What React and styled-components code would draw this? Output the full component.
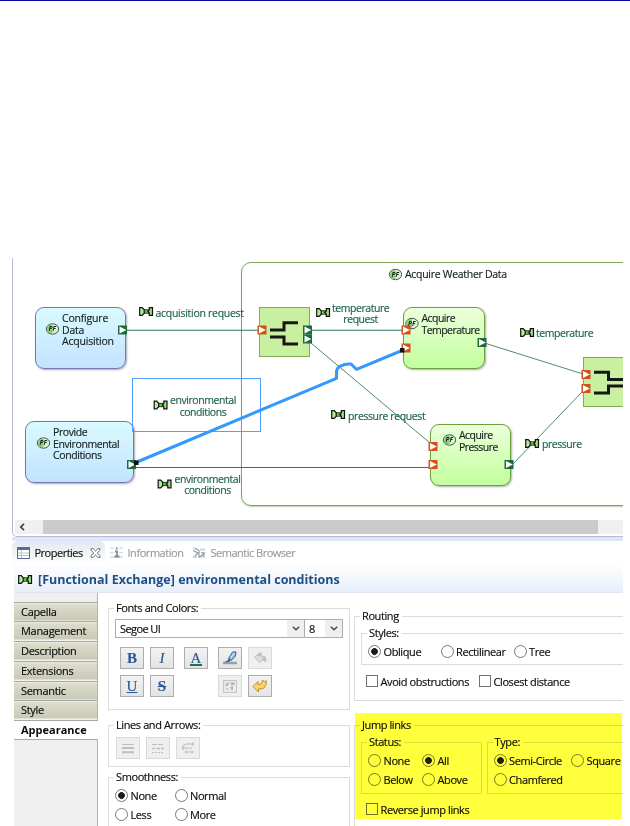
import React from "react";
import styled, { createGlobalStyle, css } from "styled-components";

const GlobalStyle = createGlobalStyle`
  * { box-sizing: border-box; }
  html, body { margin: 0; padding: 0; background: #fff; overflow: hidden; }
  body {
    font-family: "Open Sans", "Noto Sans", sans-serif;
    font-size: 11px;
    letter-spacing: -0.4px;
    color: #0c0c0c;
    -webkit-text-stroke: 0.15px currentColor;
  }
`;

const Page = styled.div`
  width: 630px;
  height: 826px;
  overflow: hidden;
  display: flex;
  flex-direction: column;
  border-top: 1px solid #0a0aa0;
  padding: 257px 7px 0 12px;
`;

/* ---------- diagram editor ---------- */

const Editor = styled.section`
  height: 279px;
  flex: none;
  border-left: 1px solid #b9b9d6;
  border-bottom: 1px solid #b9b9d6;
  border-bottom-left-radius: 5px;
  display: flex;
  flex-direction: column;
  background: #fff;
`;

const Canvas = styled.div`
  position: relative;
  height: 262px;
  overflow: hidden;
`;

const OX = 13;
const OY = 258;

const Wires = styled.svg`
  position: absolute;
  inset: 0;
  width: 610px;
  height: 262px;
`;

const at = css`
  position: absolute;
  left: ${(p) => p.$x - OX}px;
  top: ${(p) => p.$y - OY}px;
`;

const tones = {
  blue: css`
    border: 1.5px solid #7377b4;
    background: linear-gradient(#dafaff, #c3e2ff);
  `,
  green: css`
    border: 1.5px solid #6a9f3a;
    background: linear-gradient(#edffdc, #c2ff9e);
  `,
};

const FunctionNode = styled.div`
  ${at}
  width: ${(p) => p.$w}px;
  height: 62px;
  border-radius: 9px;
  box-shadow: 1px 1px 2px rgba(70, 70, 90, 0.45);
  ${(p) => tones[p.$tone]}
`;

const Container = styled.div`
  ${at}
  width: 420px;
  height: 244px;
  border: 1.5px solid #7da65a;
  border-radius: 10px;
  box-shadow: 0 1px 1px rgba(90, 120, 60, 0.35);
`;

const Block = styled.div`
  ${at}
  width: 51px;
  height: 50px;
  background: #c9f0a1;
  border: 1px solid #7fae4e;
`;

const NodeText = styled.div`
  ${at}
  line-height: 11.7px;
  white-space: pre;
  text-align: ${(p) => (p.$center ? "center" : "left")};
  color: ${(p) => (p.$link ? "#1c6249" : "#14201c")};
  letter-spacing: ${(p) => p.$ls}px;
  font-size: 10.5px;
`;

/* ---------- views below the editor ---------- */

const TabBar = styled.nav`
  height: 27px;
  flex: none;
  display: flex;
  align-items: stretch;
  padding-top: 4px;
  background: linear-gradient(#e0e5f5 0, #e0e5f5 4px, #fff 4px, #fff 100%);
`;

const ViewTab = styled.div`
  display: flex;
  align-items: center;
  flex: none;
  gap: 4.5px;
  width: ${(p) => p.$w}px;
  padding-left: 5px;
  color: ${(p) => (p.$active ? "#111" : "#9b9b9b")};
  border-radius: 6px 6px 0 0;
  background: ${(p) => (p.$active ? "linear-gradient(#e4e7f1, #fff)" : "none")};
  white-space: nowrap;
`;

const TabName = styled.span`
  margin-right: 3px;
  letter-spacing: ${(p) => p.$ls}px;
`;

const TitleBar = styled.header`
  height: 29px;
  flex: none;
  display: flex;
  align-items: center;
  gap: 5px;
  margin-left: 2px;
  padding: 3px 0 0 4px;
  background: linear-gradient(#fff, #e7eef9);
  border-bottom: 1px solid #dfe4ee;
  color: #1d4f86;
  font-weight: 700;
  font-size: 12.5px;
  letter-spacing: 0;
  -webkit-text-stroke: 0;
  white-space: nowrap;
`;

const Body = styled.div`
  flex: 1;
  min-height: 0;
  display: flex;
  margin-left: 2px;
`;

const SideTabs = styled.aside`
  width: 84px;
  flex: none;
  background: #f0f0f0;
  border-right: 1px solid #b4b4b4;
  padding-top: 8.5px;
`;

const SideTab = styled.div`
  height: 19.75px;
  padding-left: 7px;
  line-height: 17.5px;
  letter-spacing: -0.3px;
  white-space: nowrap;
  border-top: 1px solid #a8a8a8;
  width: 83px;
  ${(p) =>
    p.$active
      ? css`
          width: 84px;
          background: #fff;
          font-weight: 700;
          letter-spacing: 0;
          -webkit-text-stroke: 0;
          border-bottom: 1px solid #a8a8a8;
        `
      : css`
          background: linear-gradient(#ecece0 0, #dcdccb 2px, #c9c9b7 17px, #f3f3ec 18px);
        `}
`;

const Column = styled.div`
  flex: none;
  width: ${(p) => p.$w}px;
  margin-left: ${(p) => p.$ml}px;
  padding-top: ${(p) => p.$pt}px;
  position: relative;
`;

const Group = styled.fieldset`
  margin: 0 0 ${(p) => p.$mb || 0}px;
  min-width: 0;
  width: ${(p) => (p.$w ? p.$w + "px" : "auto")};
  height: ${(p) => p.$h}px;
  border: 1px solid #dcdcdc;
  padding: ${(p) => p.$pt || 0}px 6px 0;
  ${(p) => p.$open && css`border-right: 0; padding-right: 0;`}
`;

const Legend = styled.legend`
  margin-left: -1px;
  padding: 0 3px 0 2px;
  height: 14px;
  line-height: 14px;
  white-space: nowrap;
`;

const ComboRow = styled.div`
  display: flex;
  height: 19px;
`;

const Combo = styled.div`
  width: ${(p) => p.$w}px;
  margin-right: -1px;
  border: 1px solid #acacb4;
  display: flex;
  align-items: center;
  justify-content: space-between;
  padding-left: 4px;
  letter-spacing: -0.6px;
`;

const ComboArrow = styled.span`
  width: 17px;
  height: 17px;
  background: #efefef;
  display: flex;
  align-items: center;
  justify-content: center;
`;

const ToolGrid = styled.div`
  display: grid;
  grid-template-columns: 30px 34px 34px 30px 24px;
  grid-auto-rows: 22px;
  row-gap: 6px;
  margin: 9px 0 0 5px;
`;

const ToolRow = styled.div`
  display: flex;
  gap: 6px;
  margin-left: 1px;
`;

const ToolButton = styled.div`
  width: 24px;
  height: 22px;
  grid-column: ${(p) => p.$col || "auto"};
  display: flex;
  align-items: center;
  justify-content: center;
  background: ${(p) => (p.$off ? "#efefef" : "linear-gradient(#f2f2f2, #e4e4e4)")};
  border: 1px solid ${(p) => (p.$off ? "#d9d9d9" : "#adadad")};
  color: #2c5a93;
  font-family: "Liberation Serif", serif;
  font-weight: 700;
  font-size: 15px;
  letter-spacing: 0;
  line-height: 1;
`;

const Glyph = styled.span`
  font-style: ${(p) => (p.$italic ? "italic" : "normal")};
  font-weight: ${(p) => (p.$thin ? 400 : 700)};
  text-decoration: ${(p) => p.$line || "none"};
  text-decoration-thickness: 1px;
  border-bottom: ${(p) => (p.$bar ? "2.5px solid #1d7544" : "0")};
  line-height: ${(p) => (p.$bar ? "12px" : "1")};
  padding: 0 1px;
  margin-top: ${(p) => (p.$bar ? "2px" : "0")};
`;

const OptionGrid = styled.div`
  display: grid;
  grid-template-columns: ${(p) => p.$cols};
  grid-auto-rows: 19px;
  align-items: center;
  margin: ${(p) => p.$mt || 0}px 0 0 ${(p) => p.$ml || 0}px;
`;

const Option = styled.label`
  display: flex;
  align-items: center;
  gap: 2.5px;
  white-space: nowrap;
`;

const Circle = styled.span`
  width: 13px;
  height: 13px;
  flex: none;
  border: 1px solid #777;
  border-radius: 50%;
  background: ${(p) => (p.$on ? "radial-gradient(circle, #1c1c1c 0, #1c1c1c 3px, #fff 3.7px)" : "#fff")};
`;

const Box = styled.span`
  width: 12px;
  height: 12px;
  flex: none;
  border: 1px solid #707070;
  background: #fff;
`;

const PairRow = styled.div`
  display: flex;
  gap: 5px;
  padding-top: 3px;
`;

const Highlight = styled.div`
  position: absolute;
  left: 1px;
  top: 120px;
  width: 267px;
  height: 106px;
  background: #ffff3c;
  mix-blend-mode: multiply;
  pointer-events: none;
`;

/* ---------- drawings ---------- */

const ExchangeShape = () => (
  <>
    <rect x="4.5" y="2.8" width="6.500" height="3.4" fill="#5fce3c" stroke="#1a2a1a" strokeWidth=".9" />
    <path d="M.7 .7H3.200L5.2 2.800V6.200L3.200 8.3H.7Z" fill="#b5eaa0" stroke="#111" strokeWidth="1.2" />
    <path d="M13.5 .7H10.300V2.9L8.800 4.5L10.300 6.1V8.3H13.5Z" fill="#9be082" stroke="#111" strokeWidth="1.2" />
  </>
);

const Exchange = ({ x, y }) => (
  <g transform={`translate(${x} ${y})`}>
    <ExchangeShape />
  </g>
);

const Port = ({ x, y, c }) => (
  <g transform={`translate(${x} ${y})`}>
    <rect width="9" height="9" fill={c === "o" ? "#d2501c" : "#1b6b3d"} />
    <path d="M1.5 1L8.300 4.5L1.5 8Z" fill="#fff" />
  </g>
);

const FunctionMark = ({ x, y }) => (
  <g transform={`translate(${x} ${y})`}>
    <ellipse rx="6.200" ry="5.200" fill="#dcf3d3" stroke="#445a48" strokeWidth="1" />
    <path d="M0 -4.5A5.5 4.5 0 0 0 0 4.5Z" fill="#8ccf74" />
    <text x="-.2" y="2.4" textAnchor="middle" fontSize="6.5" fontWeight="700" fontStyle="italic" letterSpacing="0" fill="#14251a">PF</text>
  </g>
);

const wires = [
  "M127 330.3H258",
  "M310 330.3H402",
  "M133 467.5H429",
];
const slanted = ["M311 343L430 443", "M486 343.5L583 374", "M512 465L583 391"];

const boxPorts = [
  [257.5, 325.5, "o"], [303, 325.5, "g"], [303, 334.5, "g"],
  [401.5, 325.5, "o"], [401.5, 343.5, "o"], [477.5, 338, "g"],
  [428.5, 442, "o"], [428.5, 460, "o"], [504.5, 460, "g"],
  [581.5, 370, "o"], [581.5, 384, "o"],
  [118, 325.5, "g"], [127, 460, "g"],
];
const exchanges = [
  [139, 307], [316, 308], [520, 328], [331, 410], [525, 439], [153.5, 400.5], [157.5, 479.5],
];
const marks = [[52.5, 329], [43.5, 443], [395.5, 274.5], [412, 323.5], [449.5, 440]];

const linkLabels = [
  { x: 155.5, t: "acquisition request", y: 308, ls: -0.28 },
  { x: 332, t: "temperature\nrequest", y: 302.5, ls: -0.45 },
  { x: 536, t: "temperature", y: 327.5, ls: -0.45 },
  { x: 348, t: "pressure request", y: 410.5, ls: -0.4 },
  { x: 542, t: "pressure", y: 438.5, ls: -0.45 },
  { x: 170, t: "environmental\nconditions", y: 395, ls: -0.43 },
  { x: 174.5, t: "environmental\nconditions", y: 473.5, ls: -0.43 },
];
const nodeLabels = [
  { x: 62, y: 313, t: "Configure\nData\nAcquisition", ls: -0.2 },
  { x: 53, y: 427, t: "Provide\nEnvironmental\nConditions", ls: -0.4 },
  { x: 405, y: 268.7, t: "Acquire Weather Data", ls: -0.29 },
  { x: 421.5, y: 313, t: "Acquire\nTemperature", ls: -0.55 },
  { x: 459, y: 430, t: "Acquire\nPressure", ls: -0.55 },
];

function Diagram() {
  return (
    <Canvas>
      <Container $x={241} $y={262} />
      <FunctionNode $x={35} $y={307} $w={91} $tone="blue" />
      <FunctionNode $x={25} $y={421} $w={109} $tone="blue" />
      <FunctionNode $x={403} $y={307} $w={82} $tone="green" />
      <FunctionNode $x={430} $y={424} $w={81} $tone="green" />
      <Block $x={259} $y={307} />
      <Block $x={583} $y={357} />
      <Wires viewBox="13 258 610 262">
        <g fill="none" stroke="#2e7a53" strokeWidth="1.1">
          {wires.map((d) => <path key={d} d={d} />)}
        </g>
        <g fill="none" stroke="#4f8d6c" strokeWidth="1">
          {slanted.map((d) => <path key={d} d={d} />)}
        </g>
        <rect x="132.5" y="378.5" width="128" height="53" fill="none" stroke="#4fa3ff" />
        <path
          d="M137 462L336.5 378.3V371Q338 366.500 341 366Q345 363.500 351 364L356.500 369.300L402 350.500"
          fill="none" stroke="#3399ff" strokeWidth="3" strokeLinejoin="round"
        />
        <g fill="none" stroke="#171717" strokeWidth="3">
          <path d="M270 330H284V322.700H298M270 337H284V344H298" />
          <path d="M594 372.300H608.500V379.500H623M594 393H608.500V386H623" />
        </g>
        {marks.map(([x, y]) => <FunctionMark key={x} x={x} y={y} />)}
        {boxPorts.map(([x, y, c]) => <Port key={`${x}-${y}`} x={x} y={y} c={c} />)}
        {exchanges.map(([x, y]) => <Exchange key={x} x={x} y={y} />)}
        <rect x="134" y="460.500" width="4.500" height="4.500" fill="#111" />
        <rect x="400" y="348" width="4.500" height="4.500" fill="#111" />
      </Wires>
      {nodeLabels.map((l) => <NodeText key={l.x} $x={l.x} $y={l.y} $ls={l.ls}>{l.t}</NodeText>)}
      {linkLabels.map((l) => <NodeText key={l.x} $x={l.x} $y={l.y} $ls={l.ls} $link $center>{l.t}</NodeText>)}
    </Canvas>
  );
}

const ScrollBar = styled.div`
  height: 14px;
  margin-left: 2px;
  background: #f0f0f0;
  display: flex;
`;
const ScrollButton = styled.div`
  width: 28px;
  padding: 3px 0 0 4px;
  line-height: 0;
`;
const Thumb = styled.div`
  width: 555px;
  background: #cbcbcb;
`;

const Chevron = () => (
  <svg width="8" height="5" viewBox="0 0 8 5"><path d="M.8.700L4 3.800L7.200.700" fill="none" stroke="#444" strokeWidth="1.400" /></svg>
);

const TableIcon = () => (
  <svg width="13" height="12" viewBox="0 0 13 12">
    <rect x=".5" y=".5" width="12" height="11" fill="#fff" stroke="#5b6b94" />
    <path d="M1 2H12" stroke="#5b6b94" strokeWidth="2" />
    <path d="M4.500 3V11M1 6H12M1 8.500H12" stroke="#a9b6d3" strokeWidth=".8" />
  </svg>
);
const CloseIcon = () => (
  <svg width="11" height="10" viewBox="0 0 11 10">
    <path d="M1 .6H3L5.500 3L8 .6H10V2L7.300 5L10 8V9.400H8L5.500 7L3 9.400H1V8L3.700 5L1 2Z" fill="#fff" stroke="#666" strokeWidth=".9" />
  </svg>
);
const InfoIcon = () => (
  <svg width="13" height="13" viewBox="0 0 13 13">
    <path d="M0 2H4M9 2H13M0 6.500H4M9 6.500H13M0 11H13" stroke="#d3ddee" strokeWidth="1.500" />
    <path d="M5 5.500H7V10.500M4.500 10.500H9.500M6.700 1.500V3.500" fill="none" stroke="#858a94" strokeWidth="1.800" />
  </svg>
);
const BrowserIcon = () => (
  <svg width="14" height="12" viewBox="0 0 14 12">
    <path d="M1 1.500H5M8 2.500H13M1 10H5M9 10H13" stroke="#c7d5e8" strokeWidth="2" />
    <path d="M1 3.500L6 6L3 9M3.500 1.500L7 3.500V10.500M7 10.500L12 6.500M9 5.500L12.500 6L11.500 9" fill="none" stroke="#969aa1" strokeWidth="1.200" />
  </svg>
);
const BrushIcon = () => (
  <svg width="16" height="14" viewBox="0 0 16 14">
    <path d="M1 12H15" stroke="#9aa0a8" strokeWidth="2.500" />
    <path d="M2 11Q6 10.500 6.500 7L9 9.500Q7 12 2 11Z" fill="#2f69a8" />
    <path d="M6.800 7L10.500 1L14 .8L13.500 5L9.300 9.500Z" fill="#94b5dc" stroke="#2f5f99" strokeWidth=".9" />
    <path d="M8.500 7L12.500 2" stroke="#e9f2fb" />
  </svg>
);
const BucketIcon = () => (
  <svg width="14" height="14" viewBox="0 0 14 14">
    <path d="M1.500 6L6.500 2L11.500 7.500L6.500 11.500Z" fill="#dedede" stroke="#bdbdbd" />
    <path d="M4 4L8 1.500V6M11 5Q14 7 12.500 11L10 8.500Z" fill="#c4c4c4" stroke="#bdbdbd" />
  </svg>
);
const PictureIcon = () => (
  <svg width="14" height="13" viewBox="0 0 14 13">
    <rect x=".6" y=".6" width="12.800" height="11.800" fill="#ececec" stroke="#c2c2c2" />
    <path d="M2.500 4L6 2L5 6H2.500ZM7.500 2.500H11.500V5H8ZM7 7L10 6V10H8.500ZM3 8L5 8V10.500" fill="#b4b4b4" />
  </svg>
);
const UndoIcon = () => (
  <svg width="16" height="14" viewBox="0 0 16 14">
    <path d="M1 7.500L6 2.500V5.500Q10 6 10.500 1L12.500 3L14 1.500Q15.500 10.500 6.500 10V13Z" fill="#fbd767" stroke="#b98a2b" strokeWidth="1" strokeLinejoin="round" />
  </svg>
);
const LineIcon = () => (
  <svg width="14" height="11" viewBox="0 0 14 11"><path d="M1 1.500H13" stroke="#bebebe" /><path d="M1 5H13" stroke="#bebebe" strokeWidth="2" /><path d="M1 9.300H13" stroke="#bebebe" strokeWidth="2" /></svg>
);
const DashIcon = () => (
  <svg width="14" height="11" viewBox="0 0 14 11"><path d="M1 1.500H13" stroke="#bebebe" strokeDasharray="5 1" /><path d="M1 5.500H13" stroke="#bebebe" strokeWidth="1.500" strokeDasharray="3.500 1" /><path d="M1 9.500H13" stroke="#bebebe" strokeDasharray="2 1" /></svg>
);
const ArrowsIcon = () => (
  <svg width="14" height="12" viewBox="0 0 14 12"><path d="M5 2H13M11 0L13 2L11 4M3 4L1 6L3 8M1 6H11M4 10H12M5.500 8.500L4 10L5.500 11.500M10.500 8.500L12 10L10.500 11.500M5 2Q2.500 2.500 1.500 5.500" fill="none" stroke="#b8b8b8" /></svg>
);

const Radio = ({ on, children }) => <Option><Circle $on={on} />{children}</Option>;
const Check = ({ children }) => <Option><Box />{children}</Option>;

export default function App() {
  return (
    <Page>
      <GlobalStyle />
      <Editor>
        <Diagram />
        <ScrollBar>
          <ScrollButton>
            <svg width="7" height="8" viewBox="0 0 7 8"><path d="M5 .8L1.800 4L5 7.200" fill="none" stroke="#444" strokeWidth="1.700" /></svg>
          </ScrollButton>
          <Thumb />
        </ScrollBar>
      </Editor>
      <TabBar>
        <ViewTab $w={93} $active><TableIcon /><TabName $ls={-0.5}>Properties</TabName><CloseIcon /></ViewTab>
        <ViewTab $w={82}><InfoIcon /><TabName $ls={-0.45}>Information</TabName></ViewTab>
        <ViewTab $w={120}><BrowserIcon /><TabName $ls={-0.5}>Semantic Browser</TabName></ViewTab>
      </TabBar>
      <TitleBar>
        <svg width="15" height="9" viewBox="0 0 15 9"><ExchangeShape /></svg>
        [Functional Exchange] environmental conditions
      </TitleBar>
      <Body>
        <SideTabs>
          {["Capella", "Management", "Description", "Extensions", "Semantic", "Style"].map((t) => (
            <SideTab key={t}>{t}</SideTab>
          ))}
          <SideTab $active>Appearance</SideTab>
        </SideTabs>
        <Column $w={242} $ml={10} $pt={8}>
          <Group $h={109} $mb={8} $pt={4}>
            <Legend>Fonts and Colors:</Legend>
            <ComboRow>
              <Combo $w={190}>Segoe UI<ComboArrow><Chevron /></ComboArrow></Combo>
              <Combo $w={39}>8<ComboArrow><Chevron /></ComboArrow></Combo>
            </ComboRow>
            <ToolGrid>
              <ToolButton><Glyph>B</Glyph></ToolButton>
              <ToolButton><Glyph $italic $thin>I</Glyph></ToolButton>
              <ToolButton><Glyph $bar $thin>A</Glyph></ToolButton>
              <ToolButton><BrushIcon /></ToolButton>
              <ToolButton $off><BucketIcon /></ToolButton>
              <ToolButton><Glyph $thin $line="underline">U</Glyph></ToolButton>
              <ToolButton><Glyph $line="line-through">S</Glyph></ToolButton>
              <ToolButton $off $col="4"><PictureIcon /></ToolButton>
              <ToolButton><UndoIcon /></ToolButton>
            </ToolGrid>
          </Group>
          <Group $h={49} $mb={3} $pt={5}>
            <Legend>Lines and Arrows:</Legend>
            <ToolRow>
              <ToolButton $off><LineIcon /></ToolButton>
              <ToolButton $off><DashIcon /></ToolButton>
              <ToolButton $off><ArrowsIcon /></ToolButton>
            </ToolRow>
          </Group>
          <Group $h={80}>
            <Legend>Smoothness:</Legend>
            <OptionGrid $cols="59.5px 60px" $mt={1.5}>
              <Radio on>None</Radio><Radio>Normal</Radio>
              <Radio>Less</Radio><Radio>More</Radio>
            </OptionGrid>
          </Group>
        </Column>
        <Column $w={269} $ml={4} $pt={16}>
          <Group $h={92} $mb={17} $pt={3} $open>
            <Legend>Routing</Legend>
            <Group $h={39} $open>
              <Legend>Styles:</Legend>
              <OptionGrid $cols="72.5px 73px 60px" $mt={1.5}>
                <Radio on>Oblique</Radio><Radio>Rectilinear</Radio><Radio>Tree</Radio>
              </OptionGrid>
            </Group>
            <OptionGrid $cols="113px 100px" $mt={6.5} $ml={5}>
              <Check>Avoid obstructions</Check><Check>Closest distance</Check>
            </OptionGrid>
          </Group>
          <Group $h={130} $open>
            <Legend>Jump links</Legend>
            <PairRow>
              <Group $h={59} $w={121}>
                <Legend>Status:</Legend>
                <OptionGrid $cols="54px 54px" $mt={1.5}>
                  <Radio>None</Radio><Radio on>All</Radio>
                  <Radio>Below</Radio><Radio>Above</Radio>
                </OptionGrid>
              </Group>
              <Group $h={59} $w={137} $open>
                <Legend>Type:</Legend>
                <OptionGrid $cols="77.5px 52px" $mt={1.5}>
                  <Radio on>Semi-Circle</Radio><Radio>Square</Radio>
                  <Radio>Chamfered</Radio>
                </OptionGrid>
              </Group>
            </PairRow>
            <OptionGrid $cols="113px" $mt={5.5} $ml={5}>
              <Check>Reverse jump links</Check>
            </OptionGrid>
          </Group>
          <Highlight />
        </Column>
      </Body>
    </Page>
  );
}
